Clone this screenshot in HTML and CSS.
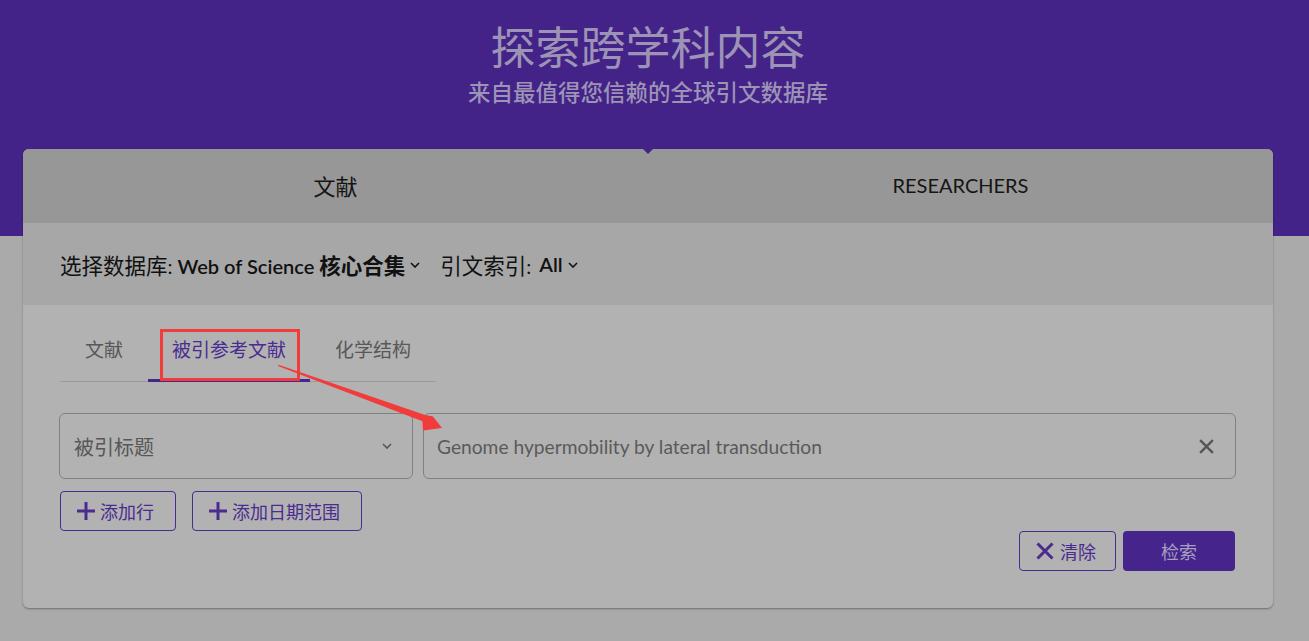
FILE: index.html
```html
<!DOCTYPE html>
<html lang="zh-CN">
<head>
<meta charset="utf-8">
<title>Web of Science</title>
<link rel="stylesheet" href="styles.css">
</head>
<body>
<div class="page">
  <header class="hero">
    <h1 class="hero-title">探索跨学科内容</h1>
    <p class="hero-sub">来自最值得您信赖的全球引文数据库</p>
  </header>

  <main class="card">
    <div class="top-tabs">
      <div class="top-tab"><span class="cjk-lg">文献</span></div>
      <div class="top-tab">RESEARCHERS</div>
    </div>
    <div class="db-row">
      <span class="db-label"><span class="cjk">选择数据库</span>:</span>
      <span class="db-value">Web of Science <b class="cjk">核心合集</b></span>
      <svg class="caret" viewBox="0 0 10 6" width="10" height="6"><path d="M1 1l4 4 4-4" fill="none" stroke="#111" stroke-width="1.6"/></svg>
      <span class="db-label idx"><span class="cjk">引文索引</span>:</span>
      <span class="db-value all">All</span>
      <svg class="caret" viewBox="0 0 10 6" width="10" height="6"><path d="M1 1l4 4 4-4" fill="none" stroke="#111" stroke-width="1.6"/></svg>
    </div>

    <div class="card-body">
      <nav class="sub-tabs">
        <div class="sub-tab">文献</div>
        <div class="sub-tab active">被引参考文献</div>
        <div class="sub-tab">化学结构</div>
      </nav>

      <div class="query-row">
        <div class="field-select">
          <span>被引标题</span>
          <svg viewBox="0 0 10 6" width="10" height="6"><path d="M1 1l4 4 4-4" fill="none" stroke="#555" stroke-width="1.6"/></svg>
        </div>
        <div class="field-input">
          <span>Genome hypermobility by lateral transduction</span>
          <svg viewBox="0 0 16 16" width="17" height="17"><path d="M2 2l12 12M14 2L2 14" stroke="#555" stroke-width="2.2" fill="none"/></svg>
        </div>
      </div>

      <div class="add-row">
        <button class="btn-outline"><svg viewBox="0 0 18 18" width="18" height="18"><path d="M9 0v18M0 9h18" stroke="#4a2b90" stroke-width="3"/></svg>添加行</button>
        <button class="btn-outline wide"><svg viewBox="0 0 18 18" width="18" height="18"><path d="M9 0v18M0 9h18" stroke="#4a2b90" stroke-width="3"/></svg>添加日期范围</button>
      </div>

      <div class="action-row">
        <button class="btn-outline clear"><svg viewBox="0 0 18 18" width="18" height="18"><path d="M1.5 1.5l15 15M16.5 1.5l-15 15" stroke="#4a2b90" stroke-width="3"/></svg>清除</button>
        <button class="btn-primary">检索</button>
      </div>
    </div>
  </main>

  <div class="annot-box"></div>
  <svg class="annot-arrow" width="1309" height="641" viewBox="0 0 1309 641">
    <polygon points="278,366 278.6,364.8 424.4,414.8 433,416.5 442,428 423,430.5 422.4,421.2" fill="#f23c3c"/>
  </svg>
</div>
</body>
</html>
```

FILE: styles.css
```css
* { box-sizing: border-box; }
html, body { margin: 0; padding: 0; }
body {
  width: 1309px;
  height: 641px;
  overflow: hidden;
  background: linear-gradient(#432388 0, #432388 236px, #aaaaaa 236px);
  font-family: "Lato", "Noto Sans CJK SC", sans-serif;
}
.page { position: relative; height: 641px; }

.hero { text-align: center; width: 1296px; padding-top: 21px; }
.hero-title {
  margin: 0;
  font-size: 45px;
  line-height: 50px;
  font-weight: 400;
  color: #9d93b6;
  font-family: "Noto Sans CJK SC", sans-serif;
}
.hero-sub {
  margin: 6px 0 0;
  font-size: 22.5px;
  line-height: 28px;
  font-weight: 500;
  color: #9d93b6;
  font-family: "Noto Sans CJK SC", sans-serif;
}

.card {
  position: relative;
  margin: 44px 0 0 23px;
  width: 1250px;
  height: 459px;
  background: #b2b2b2;
  border-radius: 6px;
  box-shadow: 0 1px 2px rgba(0,0,0,.35);
  overflow: hidden;
}
.card::before {
  content: "";
  position: absolute;
  left: 620px;
  top: 0;
  border-left: 5px solid transparent;
  border-right: 5px solid transparent;
  border-top: 5px solid #432388;
}
.top-tabs { display: flex; height: 74px; background: #979797; }
.top-tab {
  flex: 1;
  display: flex;
  align-items: center;
  justify-content: center;
  font-size: 20px;
  color: #151515;
  padding-bottom: 2px;
}
.cjk-lg { font-size: 22px; font-family: "Noto Sans CJK SC", sans-serif; }
.db-row {
  height: 82px;
  background: #a7a7a7;
  display: flex;
  align-items: center;
  padding-left: 37px;
  font-size: 20px;
  color: #111;
}
.cjk { font-size: 21.5px; font-family: "Noto Sans CJK SC", sans-serif; }
.db-value { font-weight: 600; margin-left: 5px; }
.db-value.all { margin-left: 8px; }
.db-value b { font-weight: 700; }
.caret { margin-left: 5px; margin-top: 2px; }
.idx { margin-left: 20px; }

.card-body { padding: 20px 37px 0 36px; }
.sub-tabs {
  display: flex;
  width: 376px;
  margin-left: 1px;
  border-bottom: 1px solid #9a9a9a;
}
.sub-tab {
  padding: 0 25px 8px;
  height: 57px;
  display: flex;
  align-items: center;
  font-size: 19px;
  color: #585858;
  margin-bottom: -1px;
  border-bottom: 3px solid transparent;
}
.sub-tab.active { color: #4a2d90; border-bottom-color: #45268c; padding: 0 24px 8px; }

.query-row { display: flex; gap: 10px; margin-top: 31px; height: 66px; }
.field-select, .field-input {
  border: 1px solid #818181;
  border-radius: 6px;
  display: flex;
  align-items: center;
  justify-content: space-between;
  color: #575757;
}
.field-select { width: 354px; padding: 0 20px 0 14px; font-size: 20px; }
.field-input { flex: 1; padding: 0 20px 0 13px; font-size: 19.2px; color: #5a5a5a; }

.add-row { display: flex; gap: 16px; margin-top: 12px; margin-left: 1px; }
.btn-outline {
  height: 40px;
  border: 1px solid #4a2b90;
  border-radius: 4px;
  background: transparent;
  color: #4a2b90;
  font-family: "Noto Sans CJK SC", sans-serif;
  font-size: 18px;
  display: flex;
  align-items: center;
  justify-content: flex-start;
  gap: 5px;
  padding: 0 0 0 16px;
  width: 116px;
}
.btn-outline.wide { width: 170px; }

.action-row { display: flex; justify-content: flex-end; gap: 7px; margin-right: 1px; }
.btn-outline.clear { width: 97px; gap: 6px; padding-left: 16px; }
.btn-primary {
  width: 112px;
  height: 40px;
  border: 0;
  border-radius: 4px;
  background: #45258c;
  color: #a79ec0;
  font-family: "Noto Sans CJK SC", sans-serif;
  font-size: 18px;
}

.annot-box {
  position: absolute;
  left: 160px;
  top: 329px;
  width: 140px;
  height: 52px;
  border: 3px solid #f23c3c;
}
.annot-arrow { position: absolute; left: 0; top: 0; pointer-events: none; }
```
